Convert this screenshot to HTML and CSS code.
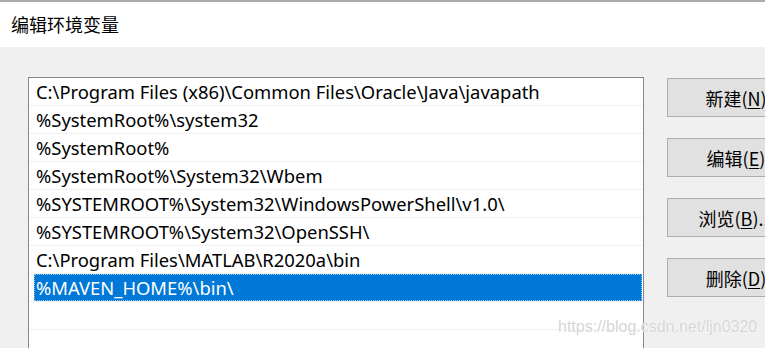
FILE: index.html
```html
<!DOCTYPE html>
<html lang="zh-CN">
<head>
  <meta charset="UTF-8" />
  <title>编辑环境变量</title>
  <link rel="stylesheet" href="styles.css">
</head>
<body>
  <div class="titlebar">编辑环境变量</div>
  <div class="content">
    <div class="pathlist">
      <div class="row">C:\Program Files (x86)\Common Files\Oracle\Java\javapath</div>
      <div class="row">%SystemRoot%\system32</div>
      <div class="row">%SystemRoot%</div>
      <div class="row">%SystemRoot%\System32\Wbem</div>
      <div class="row">%SYSTEMROOT%\System32\WindowsPowerShell\v1.0\</div>
      <div class="row">%SYSTEMROOT%\System32\OpenSSH\</div>
      <div class="row">C:\Program Files\MATLAB\R2020a\bin</div>
      <div class="row selected"><span class="sel">%MAVEN_HOME%\bin\</span></div>
      <div class="row"></div>
      <div class="row"></div>
    </div>
    <div class="buttons">
      <button>新建(<u>N</u>)</button>
      <button>编辑(<u>E</u>)</button>
      <button>浏览(<u>B</u>)...</button>
      <button>删除(<u>D</u>)</button>
    </div>
  </div>
  <div class="watermark">https://blog.csdn.net/ljn0320</div>
</body>
</html>
```

FILE: styles.css
```css
body {
  margin: 0;
  width: 765px;
  height: 348px;
  overflow: hidden;
  position: relative;
  background-color: #f0f0f0;
  font-family: "Noto Sans", "Noto Sans CJK SC", sans-serif;
  font-size: 18px;
  color: #000;
}
.titlebar {
  height: 45px;
  line-height: 44px;
  border-top: 2px solid #ababab;
  background-color: #fff;
  padding-left: 11px;
  font-family: "Noto Sans CJK SC", sans-serif;
  font-size: 18px;
}
.content {
  display: flex;
  align-items: flex-start;
  padding: 30px 0 0 28px;
}
.pathlist {
  width: 614px;
  height: 300px;
  flex-shrink: 0;
  border: 1px solid #828790;
  background-color: #fff;
}
.row {
  height: 27px;
  line-height: 28px;
  font-size: 18.4px;
  border-bottom: 1px solid #f0f0f0;
  padding-left: 7px;
  white-space: nowrap;
}
.row.selected {
  padding-left: 5px;
  padding-right: 1px;
}
.sel {
  display: block;
  height: 27px;
  padding-left: 2px;
  background-color: #0078d7;
  color: #fff;
  outline: 1px dotted #8cc2ee;
  outline-offset: -1px;
}
.buttons {
  display: flex;
  flex-direction: column;
  gap: 21px;
  margin-left: 23px;
  padding-top: 1px;
}
.buttons button {
  width: 138px;
  height: 39px;
  flex-shrink: 0;
  border: 1px solid #adadad;
  background-color: #e1e1e1;
  font-family: "Noto Sans CJK SC", sans-serif;
  font-size: 18px;
  color: #000;
  padding: 0;
}
.buttons u {
  text-underline-offset: 2px;
}
.watermark {
  position: absolute;
  left: 558px;
  top: 318px;
  font-family: "Liberation Sans", Arial, sans-serif;
  font-size: 16px;
  color: rgba(205, 205, 205, 0.85);
  text-shadow: 0 0 1px #fff, 0 0 1px #fff;
}
```
